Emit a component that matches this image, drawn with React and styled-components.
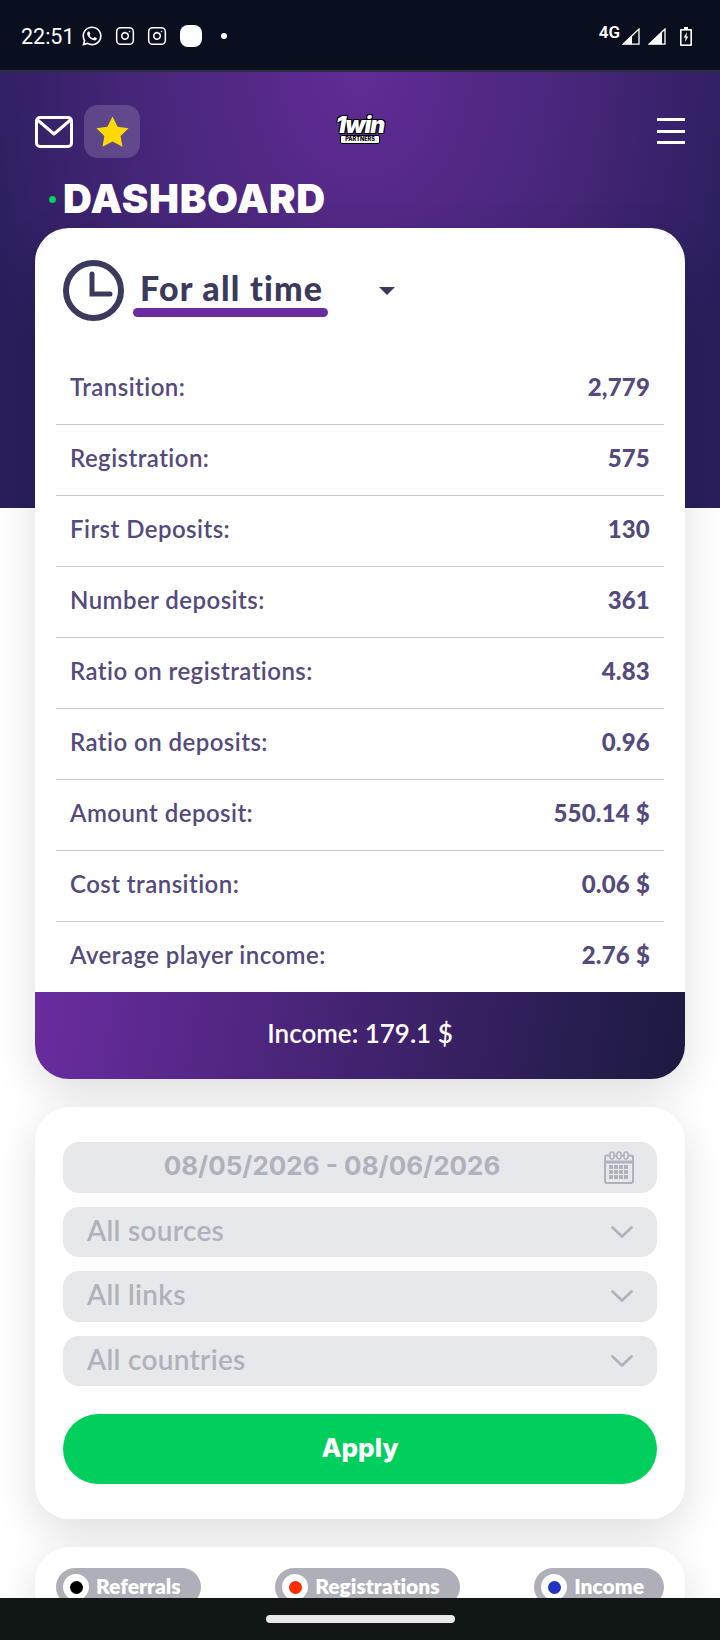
import React from 'react';
import styled, { createGlobalStyle } from 'styled-components';
import { FaWhatsapp } from 'react-icons/fa';
import { Instagram } from 'lucide-react';

const Global = createGlobalStyle`
  html, body { margin: 0; padding: 0; background: #fff; }
  * { box-sizing: border-box; }
  #root { width: 720px; height: 1640px; overflow: hidden; position: relative; font-family: Lato, "Liberation Sans", sans-serif; font-variant-ligatures: none; }
`;

const StatusBar = styled.div`
  height: 72px; background: #0a0f20; border-bottom: 2px solid #2c2c42;
  display: flex; align-items: center; justify-content: space-between;
  padding: 2px 28px 0 21px; color: #fff;
`;
const StatusGroup = styled.div`display: flex; align-items: center; gap: ${p => p.$gap || 0}px;`;
const Time = styled.span`font: 400 21.5px Roboto, sans-serif; margin-right: 8px; width: 52px;`;
const Blob = styled.span`width: 22px; height: 22px; border-radius: 8px; background: #fff; margin-left: 13px;`;
const Dot = styled.span`width: 6px; height: 6px; border-radius: 50%; background: #fff; margin-left: 19px;`;
const NetLabel = styled.span`font: 600 17px Roboto, sans-serif; margin-top: -9px; margin-right: 2px;`;
const Spacer = styled.span`width: ${p => p.$w}px;`;

const Page = styled.div`
  padding: 0 35px;
  height: 1568px;
  background: radial-gradient(ellipse 400px 520px at 50% 0, #602c94 0%, #47267a 55%, #2a1e5c 100%) no-repeat;
  background-size: 100% 436px;
`;
const TopBar = styled.header`
  height: 86px; padding-top: 33px; display: flex; align-items: flex-start;
`;
const IconGroup = styled.div`display: flex; align-items: center; gap: 11px; flex: 1;`;
const StarButton = styled.button`
  width: 56px; height: 53px; border: 0; border-radius: 14px; background: rgba(255,255,255,.16);
  display: flex; align-items: center; justify-content: center; padding: 0;
`;
const Logo = styled.div`
  display: flex; flex-direction: column; align-items: center; margin-top: 11px; width: 50px; flex: none;
`;
const LogoWord = styled.span`
  font: italic 900 23px/18px Inter, sans-serif; color: #fff; letter-spacing: -1px;
  text-shadow: 1px 1px 0 #000, -1px 1px 0 #000, 1px -1px 0 #000, -1px -1px 0 #000;
`;
const LogoTag = styled.span`
  font: 800 5.5px/7px Inter, sans-serif; background: #fff; color: #000; padding: 0 4px; border: 1px solid #000; border-radius: 2px; margin-top: 1px; white-space: nowrap;
`;
const MenuBox = styled.div`flex: 1; display: flex; justify-content: flex-end; padding-top: 13px;`;
const Burger = styled.div`
  width: 28px; display: flex; flex-direction: column; gap: 8.5px;
  span { height: 3px; background: #fff; display: block; }
`;
const TitleRow = styled.div`display: flex; align-items: center; gap: 7px; padding-left: 14px; height: 70px; padding-top: 12px;`;
const TitleDot = styled.span`width: 7px; height: 7px; background: #00cf5d; border-radius: 50%;`;
const Title = styled.h1`
  margin: 0; color: #fff; font: 900 40px/1 Inter, sans-serif; letter-spacing: 0.6px;
`;
const Card = styled.section`
  background: #fff; border-radius: 34px; box-shadow: 0 14px 44px rgba(0,0,0,.13);
  overflow: hidden;
  & + & { margin-top: 28px; }
`;
const PeriodRow = styled.div`
  height: 126px; display: flex; align-items: flex-start; padding: 32px 0 0 28px;
`;
const PeriodBlock = styled.div`
  margin-left: 9px; display: flex; flex-direction: column; width: 195px; margin-top: 9px;
`;
const PeriodText = styled.span`
  font: 900 34px/38px Lato, sans-serif; letter-spacing: 1.2px; color: #3b3a5c; padding-left: 7px; white-space: nowrap;
`;
const Underline = styled.span`height: 9px; background: #6a2ca0; border-radius: 5px; margin-top: 1px;`;
const Caret = styled.span`
  margin: 27px 0 0 51px; width: 0; height: 0;
  border-left: 8px solid transparent; border-right: 8px solid transparent; border-top: 8px solid #3b3a5c;
`;
const Rows = styled.div`padding: 0 21px;`;
const Row = styled.div`
  height: 71px; display: flex; align-items: center; justify-content: space-between;
  padding: 0 14px 6px; border-bottom: 1px solid #c9c9ce; color: #544a7d; font-size: 24px;
  &:last-child { border-bottom: 0; height: 70px; }
`;
const RowLabel = styled.span`font-weight: 600; letter-spacing: 0.45px;`;
const RowValue = styled.span`font-weight: 900; letter-spacing: 0.2px;`;
const Income = styled.div`
  height: 87px; display: flex; align-items: center; justify-content: center; color: #fff;
  font-size: 26px; font-weight: 600; padding-bottom: 6px;
  background: linear-gradient(100deg, #6a2ca0 0%, #1b1a40 100%);
`;
const Filters = styled.div`padding: 35px 28px; display: flex; flex-direction: column; gap: 14px;`;
const Field = styled.div`
  height: 50.5px; border-radius: 16px; background: #e7e8ec; color: #b0b1bb;
  display: flex; align-items: center; justify-content: space-between; padding: 0 24px 4px;
  font-size: 28px; font-weight: 600; letter-spacing: 0.3px;
  svg { margin-top: 4px; }
`;
const DateField = styled(Field)`
  position: relative; justify-content: center; padding: 0 80px 4px 24px; font: 700 26px Inter, sans-serif; letter-spacing: 0;
  svg { position: absolute; right: 23px; top: 9px; margin: 0; }
`;
const Apply = styled.button`
  height: 70px; margin-top: 14px; border: 0; border-radius: 35px; background: #00cf5d; color: #fff;
  padding: 0 0 4px; font: 800 26px Inter, sans-serif;
`;
const LegendCard = styled(Card)`height: 100px;`;
const Legend = styled.div`padding: 21px 21px 0; display: flex; justify-content: space-between;`;
const Chip = styled.div`
  height: 38px; border-radius: 24px; background: #aeafb9; color: #fff; display: flex; align-items: center;
  padding: 0 20px 0 7px; font-size: 21px; font-weight: 800; gap: 7px;
`;
const ChipText = styled.span`margin-top: -4px;`;
const ChipDot = styled.span`
  width: 26px; height: 26px; border-radius: 50%; background: #fff; display: flex; align-items: center; justify-content: center;
  &::after { content: ''; width: 13px; height: 13px; border-radius: 50%; background: ${p => p.$color}; }
`;
const NavBar = styled.div`
  position: absolute; left: 0; right: 0; bottom: 0; height: 42px; background: #101714;
  display: flex; justify-content: center; padding-top: 17px;
`;
const Pill = styled.span`width: 189px; height: 8px; border-radius: 4px; background: #e8e8e8;`;

const rows = [
  ['Transition:', '2,779'], ['Registration:', '575'], ['First Deposits:', '130'], ['Number deposits:', '361'],
  ['Ratio on registrations:', '4.83'], ['Ratio on deposits:', '0.96'], ['Amount deposit:', '550.14 $'],
  ['Cost transition:', '0.06 $'], ['Average player income:', '2.76 $'],
];

const Signal = ({ full }) => (
  <svg width="18" height="17" viewBox="0 0 18 17">
    <path d="M1 16.2 L17 1 V16.2 Z" fill="none" stroke="#fff" strokeWidth="1.3" />
    <path d={full ? 'M1 16.2 L14 4 V16.2 Z' : 'M1 16.2 L10 7.5 V16.2 Z'} fill="#fff" />
  </svg>
);
const Battery = () => (
  <svg width="12" height="19" viewBox="0 0 12 19">
    <path d="M4 0h4v2h3a1 1 0 0 1 1 1v15a1 1 0 0 1-1 1H1a1 1 0 0 1-1-1V3a1 1 0 0 1 1-1h3z" fill="#fff" />
    <rect x="1.6" y="3.6" width="8.8" height="13.8" fill="#0a0f20" />
    <path d="M7 5 3.6 10.6h2L5 15l3.4-5.6h-2z" fill="#fff" />
  </svg>
);
const Mail = () => (
  <svg width="38" height="32" viewBox="0 0 38 32" fill="none" stroke="#fff" strokeWidth="3">
    <rect x="1.5" y="1.5" width="35" height="29" rx="3.5" />
    <path d="M2 3.5 19 18 36 3.5" strokeLinejoin="round" />
  </svg>
);
const Star = () => (
  <svg width="33" height="31" viewBox="0 0 33 31" fill="#ffd900">
    <path d="M16.5 0.5 21.6 10.7 32.6 12.3 24.6 20.1 26.5 30.8 16.5 25.6 6.5 30.8 8.4 20.1 0.4 12.3 11.4 10.7Z" strokeLinejoin="round" />
  </svg>
);
const Clock = () => (
  <svg width="61" height="61" viewBox="0 0 61 61" fill="none" stroke="#3b3a5c" strokeWidth="6" strokeLinecap="round">
    <circle cx="30.5" cy="30.5" r="27.5" />
    <path d="M29 14v20h18" strokeWidth="5" />
  </svg>
);
const Chevron = () => (
  <svg width="22" height="12" viewBox="0 0 22 12" fill="none" stroke="#b0b1bb" strokeWidth="2.6" strokeLinecap="round" strokeLinejoin="round">
    <path d="M1.5 1.5 11 10.5 20.5 1.5" />
  </svg>
);
const Calendar = () => (
  <svg width="30" height="33" viewBox="0 0 30 33" fill="none" stroke="#b0b1bb">
    <rect x="1" y="4.5" width="28" height="27.5" rx="2" strokeWidth="2" />
    <path d="M1 11h28" strokeWidth="3" />
    {[6, 13, 20].map(x => <rect key={x} x={x} y="1" width="4" height="7" rx="2" fill="#e7e8ec" strokeWidth="1.5" />)}
    {[14, 19, 24].flatMap(y => [5, 10, 15, 20].map(x => <rect key={x + '-' + y} x={x} y={y} width="4" height="4" fill="#b0b1bb" stroke="none" />))}
  </svg>
);

export default function App() {
  return (
    <>
      <Global />
      <StatusBar>
        <StatusGroup>
          <Time>22:51</Time>
          <FaWhatsapp size={22} />
          <StatusGroup $gap={12} style={{ marginLeft: 12 }}>
            <Instagram size={20} strokeWidth={1.8} />
            <Instagram size={20} strokeWidth={1.8} />
          </StatusGroup>
          <Blob />
          <Dot />
        </StatusGroup>
        <StatusGroup>
          <NetLabel>4G</NetLabel>
          <Signal />
          <Spacer $w={8} />
          <Signal full />
          <Spacer $w={14} />
          <Battery />
        </StatusGroup>
      </StatusBar>
      <Page>
        <TopBar>
          <IconGroup>
            <Mail />
            <StarButton><Star /></StarButton>
          </IconGroup>
          <Logo>
            <LogoWord>1win</LogoWord>
            <LogoTag>PARTNERS</LogoTag>
          </Logo>
          <MenuBox><Burger><span /><span /><span /></Burger></MenuBox>
        </TopBar>
        <TitleRow>
          <TitleDot />
          <Title>DASHBOARD</Title>
        </TitleRow>
        <Card>
          <PeriodRow>
            <Clock />
            <PeriodBlock>
              <PeriodText>For all time</PeriodText>
              <Underline />
            </PeriodBlock>
            <Caret />
          </PeriodRow>
          <Rows>
            {rows.map(([label, value]) => (
              <Row key={label}><RowLabel>{label}</RowLabel><RowValue>{value}</RowValue></Row>
            ))}
          </Rows>
          <Income>Income: 179.1 $</Income>
        </Card>
        <Card>
          <Filters>
            <DateField>08/05/2026 - 08/06/2026<Calendar /></DateField>
            <Field>All sources<Chevron /></Field>
            <Field>All links<Chevron /></Field>
            <Field>All countries<Chevron /></Field>
            <Apply>Apply</Apply>
          </Filters>
        </Card>
        <LegendCard>
          <Legend>
            <Chip><ChipDot $color="#000" /><ChipText>Referrals</ChipText></Chip>
            <Chip><ChipDot $color="#ff2a00" /><ChipText>Registrations</ChipText></Chip>
            <Chip><ChipDot $color="#2233c4" /><ChipText>Income</ChipText></Chip>
          </Legend>
        </LegendCard>
      </Page>
      <NavBar><Pill /></NavBar>
    </>
  );
}
